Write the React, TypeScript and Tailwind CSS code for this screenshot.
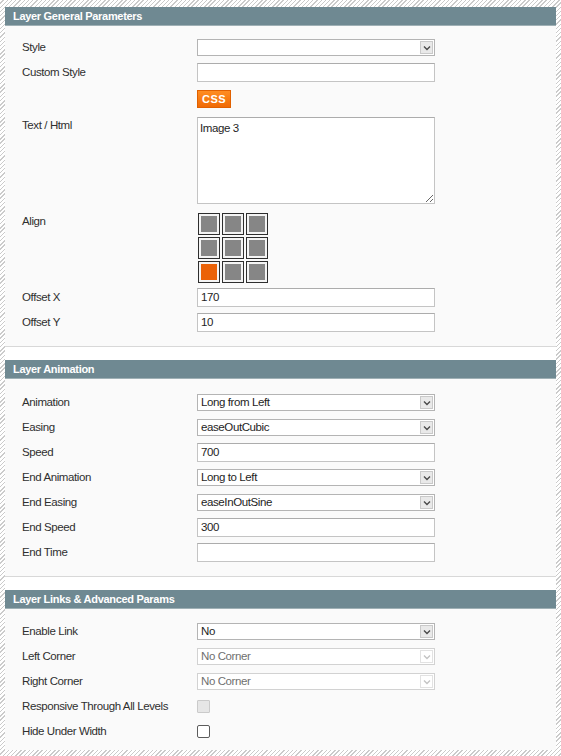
import React from "react";

const font = "font-['Liberation_Sans',Arial,sans-serif]";
const txt = "text-[11.5px] tracking-[-0.4px]";

function Chevron({ disabled }: { disabled?: boolean }) {
  return (
    <svg width="8" height="6" viewBox="0 0 8 6">
      <polyline
        points="1,1.5 4,4.5 7,1.5"
        fill="none"
        stroke={disabled ? "#c4c4c4" : "#4a4a4a"}
        strokeWidth="1.4"
      />
    </svg>
  );
}

function Select({ value, disabled }: { value: string; disabled?: boolean }) {
  return (
    <div
      className={`flex h-[17px] w-[238px] items-stretch border bg-white ${
        disabled ? "border-[#d2d2d2]" : "border-[#b4b4b4]"
      }`}
    >
      <span
        className={`flex-1 truncate pl-[3px] ${txt} leading-[15px] ${
          disabled ? "text-[#6f6f6f]" : "text-[#1e1e1e]"
        }`}
      >
        {value}
      </span>
      <span
        className={`m-[1px] flex w-[13px] items-center justify-center border ${
          disabled ? "border-[#e2e2e2] bg-white" : "border-[#c9c9c9] bg-[#e9e9e9]"
        }`}
      >
        <Chevron disabled={disabled} />
      </span>
    </div>
  );
}

function Input({ value }: { value?: string }) {
  return (
    <div className={`flex h-[19px] w-[238px] items-center border border-[#c4c4c4] border-t-[#acacac] bg-white pl-[3px] ${txt} text-[#1e1e1e]`}>
      {value}
    </div>
  );
}

function Row({ label, children }: { label: string; children: React.ReactNode }) {
  return (
    <div className="flex h-[25px] items-center">
      <div className={`w-[175px] ${txt} text-[#2f2f2f]`}>{label}</div>
      {children}
    </div>
  );
}

function Header({ title }: { title: string }) {
  return (
    <div className="flex h-[19px] items-center border-b border-[#9fb0b5] bg-[#6f8992] pl-[8px] text-[11px] font-bold tracking-[-0.3px] text-white">
      {title}
    </div>
  );
}

function AlignGrid() {
  const cells = [0, 1, 2, 3, 4, 5, 6, 7, 8];
  return (
    <div className="grid w-[70px] grid-cols-3 gap-[2px]">
      {cells.map((cell) => (
        <div key={cell} className="h-[22px] w-[22px] border border-[#2e2e2e] bg-[#f4f4f4] p-[2px]">
          <div className={`h-full w-full ${cell === 6 ? "bg-[#eb6208]" : "bg-[#868686]"}`} />
        </div>
      ))}
    </div>
  );
}

function Spacer() {
  return <div className="h-[14px] border-t border-[#d8d8d8] bg-white" />;
}

export default function App() {
  return (
    <div
      className={`${font} min-h-[756px] bg-[repeating-linear-gradient(135deg,#ffffff_0px,#ffffff_2px,#cbcbcb_2px,#cbcbcb_3px)] pt-[7px] pb-[6px]`}
    >
      <div className="mx-[5px]">
        {/* General */}
        <Header title="Layer General Parameters" />
        <div className="bg-[#fafafa] pl-[17px] pt-[9px] pb-[11px]">
          <Row label="Style">
            <Select value="" />
          </Row>
          <Row label="Custom Style">
            <Input />
          </Row>
          <div className="mt-[5px] flex">
            <div className="w-[175px]" />
            <div className="flex h-[18px] w-[34px] items-center justify-center border border-[#e06000] bg-[linear-gradient(#ff8d22,#f06a05)] text-[11px] font-bold tracking-[0.5px] text-white">
              CSS
            </div>
          </div>
          <div className="mt-[9px] flex items-start">
            <div className={`w-[175px] ${txt} leading-[17px] text-[#2f2f2f]`}>Text / Html</div>
            <textarea
              readOnly
              defaultValue="Image 3"
              className={`h-[87px] w-[238px] border border-[#c4c4c4] border-t-[#acacac] bg-white px-[2px] pt-[3px] ${txt} leading-[14px] text-[#1e1e1e] outline-none`}
            />
          </div>
          <div className="mt-[9px] flex items-start">
            <div className={`w-[175px] ${txt} leading-[17px] text-[#2f2f2f]`}>Align</div>
            <div className="pl-[1px]">
              <AlignGrid />
            </div>
          </div>
          <div className="mt-[2px]">
            <Row label="Offset X">
              <Input value="170" />
            </Row>
            <Row label="Offset Y">
              <Input value="10" />
            </Row>
          </div>
        </div>
        <Spacer />

        {/* Animation */}
        <Header title="Layer Animation" />
        <div className="bg-[#fafafa] pl-[17px] pt-[11px] pb-[11px]">
          <Row label="Animation">
            <Select value="Long from Left" />
          </Row>
          <Row label="Easing">
            <Select value="easeOutCubic" />
          </Row>
          <Row label="Speed">
            <Input value="700" />
          </Row>
          <Row label="End Animation">
            <Select value="Long to Left" />
          </Row>
          <Row label="End Easing">
            <Select value="easeInOutSine" />
          </Row>
          <Row label="End Speed">
            <Input value="300" />
          </Row>
          <Row label="End Time">
            <Input />
          </Row>
        </div>
        <Spacer />

        {/* Links */}
        <Header title="Layer Links & Advanced Params" />
        <div className="bg-[#fafafa] pl-[17px] pt-[10px] pb-[6px]">
          <Row label="Enable Link">
            <Select value="No" />
          </Row>
          <Row label="Left Corner">
            <Select value="No Corner" disabled />
          </Row>
          <Row label="Right Corner">
            <Select value="No Corner" disabled />
          </Row>
          <Row label="Responsive Through All Levels">
            <div className="h-[13px] w-[13px] rounded-[1px] border border-[#cacaca] bg-[#e6e6e6]" />
          </Row>
          <Row label="Hide Under Width">
            <div className="h-[13px] w-[13px] rounded-[2px] border border-[#5c5c5c] bg-white" />
          </Row>
        </div>
      </div>
    </div>
  );
}
